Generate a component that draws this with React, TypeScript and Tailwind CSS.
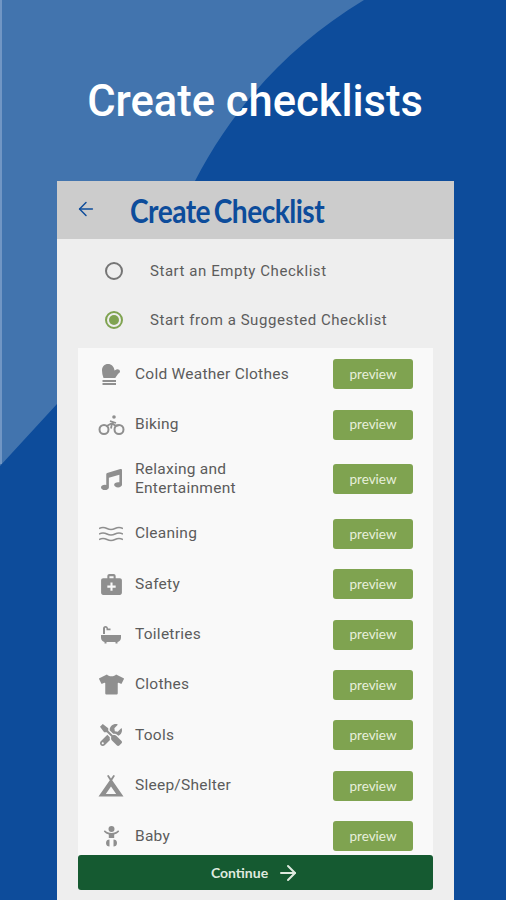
import React from 'react'
import { ArrowLeft, ArrowRight } from 'lucide-react'
import { FaMusic, FaTools, FaTshirt } from 'react-icons/fa'
import { MdMedicalServices } from 'react-icons/md'

const MittenIcon = () => (
  <svg width="22" height="24" viewBox="0 0 22 24" fill="currentColor">
    <path d="M2 8.500C2 4.500 4.500 2 8 2s6 2.500 6.500 6.500l2-1c1.500-.5 3.500.5 3.500 2 0 1-1 1.500-2 2.500l-2.500 3.500v.5H3.500C2.500 13.500 2 11 2 8.500z" />
    <rect x="2.500" y="18" width="13.500" height="2" />
    <rect x="2.500" y="21" width="13.500" height="2" />
  </svg>
)

const BikeIcon = () => (
  <svg width="27" height="22" viewBox="0 0 27 22" fill="none" stroke="currentColor" strokeWidth="2">
    <circle cx="6" cy="15.500" r="4.500" />
    <circle cx="21" cy="15.500" r="4.500" />
    <path d="M8 12.500l6-3.500 3 2.500h3.500M14 9l-1 5.500M12 7l6 2" strokeWidth="1.800" />
    <circle cx="16" cy="3" r="1.800" fill="currentColor" stroke="none" />
  </svg>
)

const WavesIcon = () => (
  <svg width="24" height="16" viewBox="0 0 24 16" fill="none" stroke="currentColor" strokeWidth="1.500">
    <path d="M0 2.500c3-1.500 5-1.500 8 0s5 1.500 8 0 5-1.500 8 0" />
    <path d="M0 8c3-1.500 5-1.500 8 0s5 1.500 8 0 5-1.500 8 0" />
    <path d="M0 13.500c3-1.500 5-1.500 8 0s5 1.500 8 0 5-1.500 8 0" />
  </svg>
)

const TubIcon = () => (
  <svg width="22" height="20" viewBox="0 0 22 20" fill="currentColor">
    <path d="M1 10h20v2.500c0 2.500-1.500 4-3.500 4.500v1.500h-2V17h-9v1.500h-2V17C2.500 16.500 1 15 1 12.500z" />
    <path d="M3 9V3.500C3 2 4 1 5.500 1S8 2 8 3.500h2.500v1.800H6.500V3.500C6.500 3 6 2.800 5.500 2.800S5 3 5 3.500V9z" />
  </svg>
)

const TentIcon = () => (
  <svg width="26" height="22" viewBox="0 0 26 22" fill="currentColor">
    <path d="M9 .800L10.600 0 13 3.600 15.400 0 17 .800 14.200 5.300 25.500 21.500H.500L11.800 5.300zM13 11.500L7.800 19h10.400z" fillRule="evenodd" />
  </svg>
)

const BabyIcon = () => (
  <svg width="17" height="21" viewBox="0 0 17 21" fill="currentColor">
    <circle cx="8.500" cy="3" r="3" />
    <path d="M.800 5.500l1-1.300c2 1.800 4 2.800 6.700 2.800s4.700-1 6.700-2.800l1 1.300c-1.500 1.500-3 2.500-5 3V12h-5.400V8.500c-2-.5-3.500-1.500-5-3z" />
    <path d="M3 17c0-2.500 1.500-3.500 3.500-3.500v7C4.500 20.500 3 19.500 3 17zM10.500 13.500c2 0 3.500 1 3.500 3.500s-1.500 3.500-3.500 3.500z" />
  </svg>
)

const items = [
  { label: 'Cold Weather Clothes', icon: <MittenIcon /> },
  { label: 'Biking', icon: <BikeIcon /> },
  { label: 'Relaxing and\nEntertainment', icon: <FaMusic size={21} />, tall: true },
  { label: 'Cleaning', icon: <WavesIcon /> },
  { label: 'Safety', icon: <MdMedicalServices size={25} /> },
  { label: 'Toiletries', icon: <TubIcon /> },
  { label: 'Clothes', icon: <FaTshirt size={25} /> },
  { label: 'Tools', icon: <FaTools size={22} /> },
  { label: 'Sleep/Shelter', icon: <TentIcon /> },
  { label: 'Baby', icon: <BabyIcon /> },
]

export default function App() {
  return (
    <div className="relative h-[900px] w-[506px] overflow-hidden bg-[#0d4c9b]" style={{ fontFamily: 'Roboto, sans-serif' }}>
      {/* Background shape */}
      <svg className="absolute left-0 top-0" width="506" height="900" viewBox="0 0 506 900">
        <path d="M0 0H364C285 48 232 110 195 181L57 404 0 466Z" fill="#4274ae" />
        <rect x="0" y="0" width="2" height="464" fill="#7196c4" />
      </svg>

      <div className="relative flex flex-col">
        <h1 className="h-[181px] pl-[4px] pt-[73px] text-center text-[43.500px] font-medium leading-[58px] text-white">
          Create checklists
        </h1>

        <div className="ml-[57px] flex h-[719px] w-[397px] flex-col bg-[#eeeeee]">
          {/* Header */}
          <div className="flex h-[58px] shrink-0 items-center bg-[#cccccc] pl-[18px]">
            <ArrowLeft size={22} strokeWidth={1.6} className="mb-[3px] text-[#0d4c9b]" />
            <span
              className="ml-[33px] mt-[2px] origin-left scale-x-[0.88] whitespace-nowrap text-[32px] font-bold tracking-[-0.6px] [word-spacing:-3px] text-[#0d4c9b]"
              style={{ fontFamily: 'Lato, sans-serif' }}
            >
              Create Checklist
            </span>
          </div>

          {/* Radio options */}
          <div className="flex h-[48px] items-center pl-[48px] pt-[16px]">
            <span className="h-[18px] w-[18px] rounded-full border-2 border-[#757575]" />
            <span className="ml-[27px] text-[15px] tracking-[0.55px] text-[#5c5c5c]">Start an Empty Checklist</span>
          </div>
          <div className="flex h-[49px] items-center pl-[48px] pt-[17px]">
            <span className="flex h-[18px] w-[18px] items-center justify-center rounded-full border-2 border-[#7fa350]">
              <span className="h-[10px] w-[10px] rounded-full bg-[#7fa350]" />
            </span>
            <span className="ml-[27px] text-[15px] tracking-[0.55px] text-[#5c5c5c]">Start from a Suggested Checklist</span>
          </div>

          {/* Suggested lists */}
          <div className="mx-[21px] mt-[12px] flex flex-col bg-[#f9f9f9] pt-[1px]">
            {items.map((item) => (
              <div key={item.label} className={`flex items-center ${item.tall ? 'h-[58.800px]' : 'h-[50.400px]'}`}>
                <div className="flex w-[57px] shrink-0 justify-center pl-[9px] text-[#8f8f8f]">{item.icon}</div>
                <span className="flex-1 whitespace-pre-line text-[15.500px] leading-[19px] tracking-[0.25px] text-[#5c5c5c]">
                  {item.label}
                </span>
                <button
                  className="mr-[20px] h-[30px] w-[80px] rounded-[3px] bg-[#7fa350] text-[13.500px] text-[#e8f0dc]"
                  style={{ fontFamily: 'Lato, sans-serif' }}
                >
                  preview
                </button>
              </div>
            ))}
          </div>
        </div>
      </div>

      {/* Continue */}
      <button
        className="absolute left-[78px] top-[855px] flex h-[35px] w-[355px] items-center justify-center gap-[8px] rounded-[3px] bg-[#155a31] text-[14px] font-bold text-[#dfeadf]"
        style={{ fontFamily: 'Lato, sans-serif' }}
      >
        Continue
        <ArrowRight size={24} strokeWidth={2} />
      </button>
    </div>
  )
}
